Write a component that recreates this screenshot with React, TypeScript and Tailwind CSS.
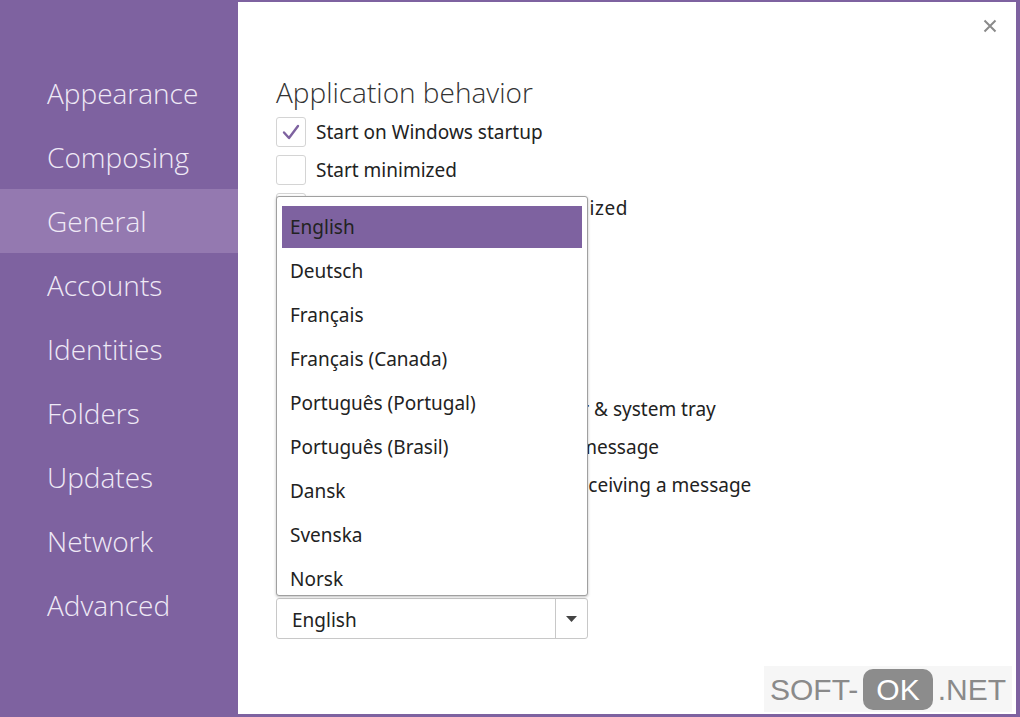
import React from "react";

const navItems = ["Appearance", "Composing", "General", "Accounts", "Identities", "Folders", "Updates", "Network", "Advanced"];
const langs = ["English", "Deutsch", "Français", "Français (Canada)", "Português (Portugal)", "Português (Brasil)", "Dansk", "Svenska", "Norsk"];

function Check({ checked }: { checked?: boolean }) {
  return (
    <div className="w-[30px] h-[30px] rounded-[3px] border border-[#d4d4d4] bg-white flex items-center justify-center shrink-0">
      {checked && (
        <svg width="20" height="18" viewBox="0 0 20 18">
          <path d="M3 9.5 L8 15 L17 3" fill="none" stroke="#7e62a0" strokeWidth="2.4" strokeLinecap="round" strokeLinejoin="round" />
        </svg>
      )}
    </div>
  );
}

function Row({ checked, text, wide }: { checked?: boolean; text: string; wide?: boolean }) {
  return (
    <div className="flex items-center gap-[10px] h-[38px]">
      <Check checked={checked} />
      <span className={`text-[19px] text-[#222] whitespace-nowrap ${wide ? "tracking-[0.5px]" : ""}`}>{text}</span>
    </div>
  );
}

export default function App() {
  return (
    <div className="w-[1020px] h-[717px] flex bg-[#7e62a0] overflow-hidden" style={{ fontFamily: '"Noto Sans", "Open Sans", sans-serif' }}>
      <nav className="w-[238px] shrink-0 pt-[61px] flex flex-col" style={{ fontFamily: '"Open Sans", "Noto Sans", sans-serif' }}>
        {navItems.map((n) => (
          <div
            key={n}
            className={`h-[64px] flex items-center pl-[47px] text-[28px] font-light text-[#efe9f6] ${n === "General" ? "bg-[#9479b0]" : ""}`}
          >
            {n}
          </div>
        ))}
      </nav>
      <main className="flex-1 bg-white mt-[2px] mb-[3px] mr-[4px] relative pl-[38px] pt-[72px]">
        <button className="absolute right-[19px] top-[17px]">
          <svg width="14" height="14" viewBox="0 0 14 14">
            <path d="M1.5 1.5 L12.5 12.5 M12.5 1.5 L1.5 12.5" stroke="#8a8a8a" strokeWidth="2" />
          </svg>
        </button>
        <h1 className="text-[28px] font-light text-[#333] leading-[36px] mb-[3px]" style={{ fontFamily: '"Open Sans", "Noto Sans", sans-serif' }}>
          Application behavior
        </h1>
        <div className="flex flex-col">
          <Row checked text="Start on Windows startup" />
          <Row text="Start minimized" />
          <Row wide text="Minimize to tray when minimized" />
        </div>
        <div className="h-[163px]" />
        <div className="flex flex-col">
          <Row text="Show unread count on taskbar & system tray" />
          <Row text="Show a notification for a new message" />
          <Row text="Bring window to front when receiving a message" />
        </div>
        <div className="mt-[94px] w-[312px] h-[41px] border border-[#c8c8c8] rounded-[3px] flex items-stretch bg-white">
          <span className="flex-1 flex items-center pl-[15px] pt-[3px] text-[19px] text-[#222]">English</span>
          <div className="w-[32px] border-l border-[#c8c8c8] flex items-center justify-center">
            <svg width="11" height="6" viewBox="0 0 11 6">
              <path d="M0 0 L11 0 L5.5 6 Z" fill="#444" />
            </svg>
          </div>
        </div>

        <div className="absolute left-[38px] top-[194px] w-[312px] h-[400px] bg-white border border-[#a0a0a0] rounded-[3px] shadow-[0_1px_3px_rgba(0,0,0,0.25)] px-[5px] pt-[9px] flex flex-col">
          {langs.map((l, i) => (
            <div
              key={l}
              className={`h-[42px] shrink-0 flex items-center pl-[8px] text-[19px] text-[#222] mb-[2px] ${i === 0 ? "bg-[#7e62a0]" : ""}`}
            >
              {l}
            </div>
          ))}
        </div>

        <div className="absolute right-[4px] bottom-[2px] w-[248px] h-[46px] bg-[#f6f6f6] flex items-center justify-center text-[30px] text-[#8a8a8a]" style={{ fontFamily: '"Liberation Sans", Arial, sans-serif' }}>
          <span>SOFT-</span>
          <span className="mx-[5px] px-[13px] h-[41px] rounded-[10px] bg-[#8c8c8c] text-white flex items-center">OK</span>
          <span>.NET</span>
        </div>
      </main>
    </div>
  );
}
